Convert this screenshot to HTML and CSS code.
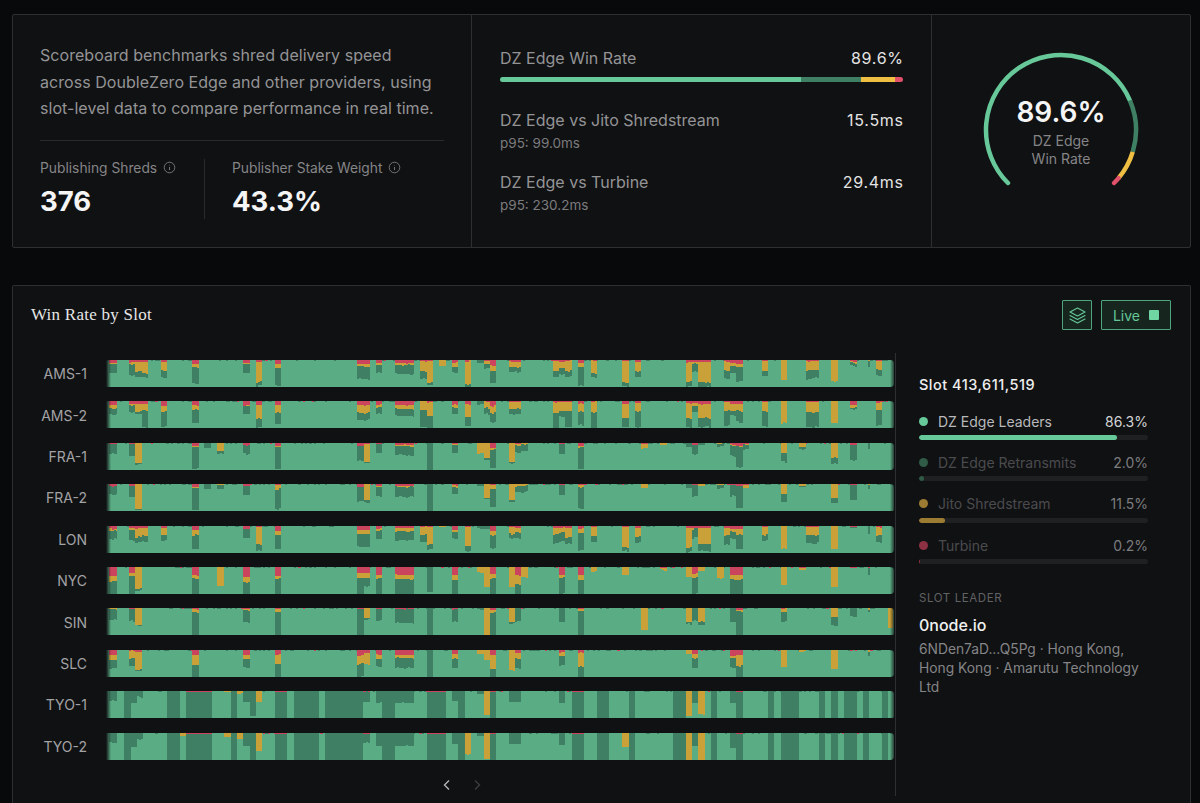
FILE: index.html
```html
<!DOCTYPE html>
<html lang="en">
<head>
<meta charset="utf-8">
<title>Scoreboard</title>
<link rel="stylesheet" href="styles.css">
</head>
<body>
<main class="page">
  <section class="summary">
    <div class="intro">
      <p class="intro-text">Scoreboard benchmarks shred delivery speed across DoubleZero Edge and other providers, using slot-level data to compare performance in real time.</p>
      <div class="stats">
        <div class="stat stat-first">
          <div class="stat-label">Publishing Shreds
            <svg class="info" viewBox="0 0 14 14"><circle cx="7" cy="7" r="5.7"/><path d="M7 6.4v3.4M7 4.2v.5"/></svg>
          </div>
          <div class="stat-value">376</div>
        </div>
        <div class="stat stat-second">
          <div class="stat-label">Publisher Stake Weight
            <svg class="info" viewBox="0 0 14 14"><circle cx="7" cy="7" r="5.7"/><path d="M7 6.4v3.4M7 4.2v.5"/></svg>
          </div>
          <div class="stat-value">43.3%</div>
        </div>
      </div>
    </div>
    <div class="metrics">
      <div class="metric-top">
        <div class="metric-line"><span>DZ Edge Win Rate</span><span class="metric-num">89.6%</span></div>
        <div class="share-bar">
          <span class="seg seg-leader"></span><span class="seg seg-retrans"></span><span class="seg seg-jito"></span><span class="seg seg-turbine"></span>
        </div>
      </div>
      <div class="metric">
        <div class="metric-line"><span>DZ Edge vs Jito Shredstream</span><span class="metric-num">15.5ms</span></div>
        <div class="metric-sub">p95: 99.0ms</div>
      </div>
      <div class="metric">
        <div class="metric-line"><span>DZ Edge vs Turbine</span><span class="metric-num">29.4ms</span></div>
        <div class="metric-sub">p95: 230.2ms</div>
      </div>
    </div>
    <div class="gauge-cell">
      <div class="gauge">
        <svg class="gauge-svg" viewBox="0 0 160 160" id="gauge"></svg>
        <div class="gauge-text">
          <div class="gauge-value">89.6%</div>
          <div class="gauge-label">DZ Edge<br>Win Rate</div>
        </div>
      </div>
    </div>
  </section>

  <section class="chart-card">
    <header class="chart-head">
      <h2 class="chart-title">Win Rate by Slot</h2>
      <div class="chart-actions">
        <button class="tool-btn" type="button" aria-label="Layers">
          <svg viewBox="0 0 24 24" class="layers"><path d="M12 2.500 2.500 7.500 12 12.500l9.500-5z"/><path d="M2.500 12 12 17l9.500-5"/><path d="M2.500 16.500 12 21.500l9.500-5"/></svg>
        </button>
        <button class="live-btn" type="button">Live <span class="live-square"></span></button>
      </div>
    </header>
    <div class="chart-body">
      <div class="plot">
        <div class="rows">
          <div class="row"><span class="row-label">AMS-1</span><svg class="strip" data-row="0"></svg></div>
          <div class="row"><span class="row-label">AMS-2</span><svg class="strip" data-row="1"></svg></div>
          <div class="row"><span class="row-label">FRA-1</span><svg class="strip" data-row="2"></svg></div>
          <div class="row"><span class="row-label">FRA-2</span><svg class="strip" data-row="3"></svg></div>
          <div class="row"><span class="row-label">LON</span><svg class="strip" data-row="4"></svg></div>
          <div class="row"><span class="row-label">NYC</span><svg class="strip" data-row="5"></svg></div>
          <div class="row"><span class="row-label">SIN</span><svg class="strip" data-row="6"></svg></div>
          <div class="row"><span class="row-label">SLC</span><svg class="strip" data-row="7"></svg></div>
          <div class="row"><span class="row-label">TYO-1</span><svg class="strip" data-row="8"></svg></div>
          <div class="row"><span class="row-label">TYO-2</span><svg class="strip" data-row="9"></svg></div>
        </div>
        <div class="pager">
          <svg class="chev" viewBox="0 0 12 12"><path d="M8 1.500 3.500 6 8 10.500"/></svg>
          <svg class="chev chev-off" viewBox="0 0 12 12"><path d="M4 1.500 8.500 6 4 10.500"/></svg>
        </div>
      </div>
      <aside class="side">
        <div class="slot-id">Slot 413,611,519</div>
        <ul class="legend">
          <li class="legend-item">
            <div class="legend-line"><span class="dot dot-leader"></span><span class="legend-name name-on">DZ Edge Leaders</span><span class="legend-val val-on">86.3%</span></div>
            <div class="track"><span class="fill fill-leader"></span></div>
          </li>
          <li class="legend-item">
            <div class="legend-line"><span class="dot dot-retrans"></span><span class="legend-name">DZ Edge Retransmits</span><span class="legend-val">2.0%</span></div>
            <div class="track"><span class="fill fill-retrans"></span></div>
          </li>
          <li class="legend-item">
            <div class="legend-line"><span class="dot dot-jito"></span><span class="legend-name">Jito Shredstream</span><span class="legend-val">11.5%</span></div>
            <div class="track"><span class="fill fill-jito"></span></div>
          </li>
          <li class="legend-item">
            <div class="legend-line"><span class="dot dot-turbine"></span><span class="legend-name">Turbine</span><span class="legend-val">0.2%</span></div>
            <div class="track"><span class="fill fill-turbine"></span></div>
          </li>
        </ul>
        <div class="leader-cap">SLOT LEADER</div>
        <div class="leader-name">0node.io</div>
        <p class="leader-desc">6NDen7aD...Q5Pg · Hong Kong, Hong Kong · Amarutu Technology Ltd</p>
      </aside>
    </div>
  </section>
</main>
<script src="chart.js"></script>
</body>
</html>
```

FILE: styles.css
```css
* { box-sizing: border-box; }
html, body { margin: 0; height: 803px; overflow: hidden; }
body {
  background: #08090b;
  color: #9a9a9c;
  font-family: Inter, "Liberation Sans", sans-serif;
}
.page { padding: 14px 9px 0 12px; }

.summary {
  display: grid;
  grid-template-columns: 458px 461px 1fr;
  height: 234px;
  background: #101113;
  border: 1px solid #2e2f32;
  border-radius: 2px;
}
.intro { padding: 27px 27px 0 27px; }
.intro-text {
  margin: 0;
  font-size: 16px;
  line-height: 26.5px;
  color: #949496;
  letter-spacing: 0.05px;
}
.stats {
  display: flex;
  margin-top: 18px;
  padding-top: 18px;
  border-top: 1px solid #2a2b2e;
}
.stat-first { width: 165px; height: 60px; border-right: 1px solid #2a2b2e; }
.stat-second { padding-left: 27px; }
.stat-label {
  display: flex;
  align-items: center;
  gap: 6px;
  font-size: 13.8px;
  line-height: 18px;
  color: #858587;
  white-space: nowrap;
}
.info { width: 13px; height: 13px; fill: none; stroke: #7a7a7c; stroke-width: 1; }
.stat-value {
  margin-top: 6px;
  font-size: 27.5px;
  line-height: 36px;
  font-weight: 650;
  color: #f5f5f5;
}

.metrics {
  padding: 31px 28px 0 28px;
  border-left: 1px solid #2e2f32;
  border-right: 1px solid #2e2f32;
}
.metric-line {
  display: flex;
  justify-content: space-between;
  font-size: 16px;
  line-height: 24px;
  color: #949496;
}
.metric-num { color: #e4e4e4; letter-spacing: 0.7px; margin-right: -0.7px; }
.share-bar {
  display: flex;
  height: 5px;
  margin-top: 7px;
  border-radius: 3px;
  overflow: hidden;
}
.seg { display: block; height: 100%; }
.seg-leader { width: 74.7%; background: #67c99a; }
.seg-retrans { width: 14.9%; background: #3f8065; }
.seg-jito { width: 8.5%; background: #efbf44; }
.seg-turbine { width: 1.9%; background: #e2516a; }
.metric-top { height: 62px; }
.metric { height: 62px; }
.metric-sub { margin-top: 1px; font-size: 13.5px; line-height: 20px; color: #7c7c7e; }

.gauge-cell { display: flex; justify-content: center; align-items: flex-start; padding-top: 35px; }
.gauge { position: relative; width: 160px; height: 160px; }
.gauge-svg { display: block; width: 160px; height: 160px; }
.gauge-text {
  position: absolute;
  left: 0;
  right: 0;
  top: 44px;
  text-align: center;
}
.gauge-value { font-size: 28px; line-height: 36px; font-weight: 600; color: #f5f5f5; }
.gauge-label { margin-top: 2px; font-size: 14px; line-height: 18px; color: #858587; }

.chart-card {
  height: 518px;
  margin-top: 37px;
  background: #101113;
  border: 1px solid #2e2f32;
  border-bottom: 0;
  border-radius: 2px 2px 0 0;
}
.chart-head {
  display: flex;
  justify-content: space-between;
  align-items: flex-start;
  height: 67px;
  padding: 14px 19px 0 18px;
}
.chart-title {
  margin: 0;
  padding-top: 5px;
  font-family: "Liberation Serif", serif;
  font-size: 17px;
  line-height: 20px;
  font-weight: 400;
  color: #e6e6e6;
  letter-spacing: 0.25px;
}
.chart-actions { display: flex; gap: 9px; }
.tool-btn, .live-btn {
  height: 30px;
  display: flex;
  align-items: center;
  justify-content: center;
  padding: 0;
  background: #16261f;
  border: 1px solid #4fa67e;
  border-radius: 1px;
  font-family: inherit;
}
.tool-btn { width: 30px; }
.layers { width: 19px; height: 19px; fill: none; stroke: #65c797; stroke-width: 1.4; stroke-linejoin: round; stroke-linecap: round; }
.live-btn { width: 70px; gap: 9px; font-size: 14px; color: #65c797; }
.live-square { width: 10px; height: 10px; background: #6fd5a3; border-radius: 1px; }

.chart-body { display: flex; height: 443px; }
.plot { width: 882px; padding-top: 7px; }
.rows { display: flex; flex-direction: column; gap: 14px; }
.row { display: flex; align-items: center; height: 27.4px; }
.row-label {
  width: 74px;
  text-align: right;
  font-size: 14px;
  color: #a3a3a5;
}
.strip {
  display: block;
  width: 788px;
  height: 27.4px;
  margin-left: 19px;
  border-radius: 0 3px 3px 0;
  shape-rendering: crispEdges;
  -webkit-mask-image: linear-gradient(to right, transparent, #000 5px, #000 calc(100% - 4px), rgba(0,0,0,.3));
  mask-image: linear-gradient(to right, transparent, #000 5px, #000 calc(100% - 4px), rgba(0,0,0,.3));
}
.pager { display: flex; justify-content: center; gap: 18px; margin-top: 19px; padding-left: 16px; }
.chev { width: 12px; height: 12px; fill: none; stroke: #b4b4b4; stroke-width: 1.4; }
.chev-off { stroke: #3c3c3f; }

.side {
  flex: 1;
  border-left: 1px solid #2e2f32;
  padding: 23px 42px 0 23px;
}
.slot-id { font-size: 14.5px; line-height: 18px; font-weight: 500; color: #eeeeee; letter-spacing: 0.5px; white-space: nowrap; }
.legend { list-style: none; margin: 18px 0 0; padding: 0; }
.legend-item { height: 41.4px; }
.legend-line { display: flex; align-items: center; height: 18px; font-size: 14px; color: #4b4b4e; }
.dot { width: 9px; height: 9px; border-radius: 50%; margin-right: 10px; }
.dot-leader { background: #67c99a; }
.dot-retrans { background: #2f5b47; }
.dot-jito { background: #9c7c32; }
.dot-turbine { background: #8c3144; }
.legend-name { flex: 1; }
.name-on { color: #b9b9bb; }
.legend-val { color: #7c7c7e; }
.val-on { color: #d4d4d6; }
.track { height: 5px; margin-top: 5px; background: #1f2022; border-radius: 3px; overflow: hidden; }
.fill { display: block; height: 100%; border-radius: 3px; }
.fill-leader { width: 86.3%; background: #67c99a; }
.fill-retrans { width: 2%; background: #2f5b47; }
.fill-jito { width: 11.5%; background: #9c7c32; }
.fill-turbine { width: 0.2%; background: #8c3144; }

.leader-cap { margin-top: 12px; font-size: 11.5px; line-height: 16px; letter-spacing: 0.6px; color: #626264; }
.leader-name { margin-top: 8px; font-size: 16px; line-height: 22px; font-weight: 500; color: #f2f2f2; }
.leader-desc { margin: 4px 0 0; font-size: 13.8px; line-height: 19.3px; color: #858587; }
```

FILE: chart.js
```js
// Slot blocks: x range along the strip, in pixels of its 786-wide viewBox.
var S = {
  a:[2.3,9.7], b1:[22,28.3], b2:[28.3,34.7], b3:[34.7,41.3], c:[53.7,60.3], d:[85.3,92],
  e:[136.3,142.7], f:[148.7,155.3], g:[167.7,174.3], h1:[250,256.5], h2:[256.5,263],
  i:[269,275.3], j:[288,307], k1:[313.3,319.7], k2:[319.7,326], l:[332.3,338.7], m:[345,351.3],
  n:[357.7,364], o1:[370.3,376.7], o2:[376.7,383], o3:[383,389.3],
  p1:[401.7,408], p2:[408,414.3], p3:[414.3,420.7],
  q1:[445.7,452], q2:[452,458.3], q3:[458.3,464.7], r:[471,477.3], s:[483.7,490],
  t:[515.3,521.7], u:[528,534.3], u2:[534,541], u3:[553,560],
  v1:[578.7,585], v2:[585,591.3], v3:[591.3,597.7], v4:[597.7,604], w0:[610.3,616.7],
  w1:[616.7,623], w2:[623,629.3], w3:[629.3,635.7], w4:[635.7,642],
  x:[654.7,661], y:[673.7,680], y2:[692.3,699], z1:[699,705.3], z2:[705.3,711.7],
  aa:[724.3,730.7], bb:[743.3,749.7], cc:[760.7,762.5], dd:[768.7,775], ee:[781,786],
  e1:[97,104], e2:[110.3,117]
};

// Row text: slot:red,yellow,dark (stack heights from the top of the strip).
var ROWS = [
 "a:3,1,9 b1:2,2,11 b2:2,9,6 b3:2,11,4 c:2,9,7 d:4,4,16 e:3,1,9 f:2,20,4 g:4,4,17 h1:4,3,12 h2:4,3,12 i:3,2,8 j:3,2,9 k1:1,10,8 k2:1,22,3 l:0,6,0 m:3,4,6 n:1,23,3 o1:0,0,3 o2:1,3,4 o3:6,5,12 p1:2,5,5 p2:2,5,5 q1:1,10,6 q2:2,6,6 q3:1,10,6 r:3,4,18 s:1,12,4 t:1,22,3 u:2,9,6 v1:2,20,4 v2:2,2,8 v3:2,20,5 v4:2,20,5 w1:2,9,8 w2:3,3,7 w3:4,3,14 x:1,10,5 y:0,20,0 z1:1,9,9 z2:1,9,8 aa:0,21,0 bb:2,1,3 cc:0,1,6 dd:1,9,6",
 "a:4,3,6 b1:3,1,7 b2:3,7,3 b3:3,6,17 c:5,6,15 d:4,5,13 e:4,1,8 f:4,14,9 g:4,8,11 h1:4,8,7 h2:4,8,7 i:4,3,6 j:4,4,7 k1:0,9,17 k2:1,14,12 m:4,3,6 n:3,13,9 o1:0,0,3 o2:1,6,6 o3:5,7,9 p1:1,7,5 p2:1,7,5 q1:1,10,16 q2:1,9,5 q3:1,9,16 r:3,8,13 s:1,10,16 t:3,14,9 u:2,8,16 v1:2,15,9 v2:2,3,6 v3:3,14,9 v4:3,14,9 w1:1,9,15 w2:3,7,4 w3:3,7,11 x:1,9,15 y:0,22,0 z1:1,10,15 z2:1,10,15 aa:0,22,0 bb:4,3,1 dd:2,7,15",
 "a:1,0,10 b1:1,0,12 b2:0,20,1 d:3,1,22 e1:0,0,5 e2:0,8,3 e:2,0,9 g:3,1,22 h1:3,0,15 h2:1,18,1 i:1,0,9 j:2,1,9 k2:0,0,27.4 m:1,1,8 o1:0,10,0 o2:0,15,2 o3:5,1,18 p1:0,19,1 p2:1,1,7 p3:0,1,7 q2:1,0,10 r:3,1,22 u2:1,4,0 u3:0,2,0 v1:0,0,4 v2:2,0,9 v3:0,0,2 w0:0,1,3 w2:2,1,10 w3:3,1,20 w4:1,1,5 y:0,10,9 y2:0,4,3 aa:0,15,6 bb:2,0,15 cc:0,0,6",
 "a:2,0,8 b1:2,0,11 b2:0,25,1 d:3,1,22 e1:0,0,5 e2:0,1,4 e:2,0,9 g:1,4,20 h1:3,0,14 h2:0,16,3 i:2,1,9 j:2,1,10 k2:0,0,27.4 m:1,2,7 o1:0,0,2 o2:0,14,1 o3:1,4,18 p1:0,16,2 p2:0,2,6 p3:0,2,6 q2:1,0,10 r:1,3,21 u2:0,4,0 v1:0,0,4 v2:1,0,11 v3:0,2,0 w0:0,1,3 w2:1,0,11 w3:2,0,22 w4:1,3,0 y:0,10,8 y2:0,2,1 aa:0,14,5 bb:1,0,15 cc:0,1,5",
 "a:3,2,8 b1:2,2,10 b2:2,9,5 b3:2,8,6 c:2,7,6 d:4,5,14 e:3,0,9 f:1,17,6 g:5,4,14 h1:4,4,13 h2:4,4,13 i:3,1,9 j:2,3,9 k1:1,8,7 k2:1,17,5 l:0,1,0 m:4,2,7 n:1,19,5 o1:0,0,3 o2:0,0,3 o3:5,4,13 p1:1,7,4 p2:2,4,6 q1:2,6,9 q2:1,5,9 q3:2,9,6 r:3,4,17 s:1,9,6 t:1,20,4 u:2,8,6 v1:2,20,4 v2:2,1,9 v3:2,16,7 v4:2,16,7 w1:2,7,9 w2:3,3,7 w3:3,6,14 x:1,8,6 y:0,23,0 z1:1,8,8 z2:1,8,8 aa:0,23,0 bb:1,0,1 cc:0,0,8 dd:1,8,7",
 "a:9,5,13 b1:6,3,18.4 b2:0,22,2 e2:0,19,0 d:8,4,15.4 e:10,5,12.4 g:9,3,15.4 h1:6,5,16 h2:6,5,8 i:8,3,16.4 j:8,4,15.4 k2:0,0,25 m:8,5,14.4 o1:0,6,0 o2:0,20,0 o3:7,4,16.4 p1:0,20,0 p2:8,9,10.4 p3:0,10,0 q2:8,3,16.4 r:8,4,15.4 s:0,5,0 t:0,8,0 u3:1,2,0 v1:0,10,0 v2:7,4,16.4 v3:0,4,0 w0:0,11,0 w2:8,5,14.4 w3:8,5,14.4 y:0,18,0 y2:1,2,0 aa:0,20,0 bb:1,0,0 cc:1,1,7",
 "a:0,1,11 b1:1,0,12 b2:0,17,1 d:1,3,23.4 e:1,1,12 g:1,3,23.4 h1:1,0,26.4 h2:0,10,2 i:1,0,12 j:1,0,14 k2:0,0,27.4 m:1,0,12 o1:0,0,2 o2:0,27.4,0 o3:2,2,23.4 p1:0,14,2 p2:0,0,13 q2:0,0,14 r:1,2,24.4 u2:0,22,0 v1:0,14,2 v2:0,0,13 v3:0,14,3 w2:0,0,14 w3:2,1,24.4 y:1,3,10 aa:0,9,9 bb:0,0,9 cc:0,2,2 ee:0,20,0",
 "a:5,5,8 b1:1,7,8 b2:2,18,1 d:5,10,12.4 e:5,4,8 g:5,9,13.4 h1:6,8,13.4 h2:3,12,0 i:5,4,8 j:5,3,10 k2:0,0,27.4 m:4,5,9 o1:0,4,0 o2:0,10,0 o3:5,14,8.4 p1:0,20,0 p2:3,6,9 q2:3,3,9 r:3,14,10.4 v1:0,4,0 v2:4,4,10 w2:6,2,10 w3:5,11,11.4 y:0,17,0 y2:0,2,0 aa:0,19,0 bb:1,0,0 cc:0,2,4",
 "a:0,0,10 60.3-73:0,0,27.4 79.3-104.7:0.6,0,26.8 17.3-23.6:0,0,27.4 23.6-30:0,0,12 30-36:0,0,6 117.3-123.7:0,1,0 123.7-130:0,0,27.4 130-136.3:0,3,0 136.3-142.7:0,0,11 142.7-149:0,0,25 149-155.3:0,11,0 167.7-180.3:0.6,0,26.8 186.7-212:0,0,27.4 218.3-256.3:0,0,27.4 256.3-263:0.6,0,10 269-275.3:0,0,12 275.3-288:0,0,27.4 288-307:0,0,12 319.7-338.7:0.6,0,26.8 345-351.3:0,0,10 351.3-357.7:0,0,27.4 370.3-376.7:0,0,3 376.7-383:0,24,0 383-389.3:0.8,0,26.6 401.7-414.3:0,0,11 452-458.3:0,0,12 464.7-477.3:0.8,0,26.6 490-502.3:0,0,27.4 521.7-528:0,0,27.4 566-578.7:0,0,27.4 578.7-585:0,25,0 585-591.3:0,0,12 591.3-597.7:0,23,0 604-610.3:0,0,27.4 623-629.3:0,0,12 629.3-635.7:0.8,0,26.6 661-667.3:0,0,27.4 673.7-692.3:0,0,27.4 692.3-699:0,0,1 711.7-718:0,0,27.4 724.3-730.7:0,0,27.4 737-749.7:0,0,27.4 756-762.3:0,0,27.4 775-781.3:0,0,27.4",
 "a:0,0,10 60.3-73:0,0,27.4 73-79.3:0,3,0 79.3-104.7:0.6,0,26.8 17.3-23.6:0,0,27.4 23.6-30:0,0,14 30-36:0,0,6 117.3-123.7:0,4,0 123.7-130:0,0,27.4 130-136.3:0,6,0 136.3-142.7:0,0,13 142.7-149:0,0,27.4 149-155.3:0,18,0 167.7-180.3:0.6,0,26.8 186.7-212:0,0,27.4 218.3-256.3:0,0,27.4 256.3-263:0.6,0,9 269-275.3:0,0,13 275.3-288:0,0,27.4 288-307:0,0,13 319.7-338.7:0.6,0,26.8 345-351.3:0,0,11 351.3-357.7:0,0,27.4 357.7-364:0,21,0 370.3-376.7:0,0,3 376.7-383:0,26,0 383-389.3:0.8,0,26.6 401.7-414.3:0,0,11 452-458.3:0,0,12 464.7-477.3:0.8,0,26.6 490-502.3:0,0,27.4 515.3-521.7:0,14,0 521.7-528:0,0,27.4 566-578.7:0,0,27.4 578.7-585:0,27.4,0 585-591.3:0,0,13 591.3-597.7:0,27.4,0 604-610.3:0,0,27.4 623-629.3:0,0,15 629.3-635.7:0.8,0.6,26 661-667.3:0,0,27.4 673.7-692.3:0,0,27.4 711.7-718:0,0,27.4 724.3-730.7:0,0,27.4 737-749.7:0,0,27.4 756-762.3:0,0,27.4 775-781.3:0,0,27.4"
];

var COLORS = { base: "#5aac85", dark: "#3f8065", jito: "#c9a138", turbine: "#c9445c", edge: "#3c9a6e" };
var H = 27.4, W = 786, STEP = 2.2, NS = "http://www.w3.org/2000/svg";

function rng(seed) {
  var s = seed;
  return function () {
    s = (s * 16807) % 2147483647;
    return (s - 1) / 2147483646;
  };
}

function addRect(svg, x, y, w, h, fill) {
  if (h <= 0) return;
  var r = document.createElementNS(NS, "rect");
  r.setAttribute("x", x.toFixed(2));
  r.setAttribute("y", y.toFixed(2));
  r.setAttribute("width", w.toFixed(2));
  r.setAttribute("height", h.toFixed(2));
  r.setAttribute("fill", fill);
  svg.appendChild(r);
}

function drawStack(svg, x, w, r, y, d, rand) {
  var top = 0;
  var j = function (v) { return v > 0 && v < 27 ? Math.max(0.5, v + (rand() - 0.5) * 1.1) : v; };
  var rr = j(r), yy = j(y), dd = j(d);
  if (d >= 26) rr = r;
  addRect(svg, x, top, w, Math.min(rr, H - top), COLORS.turbine); top += rr;
  addRect(svg, x, top, w, Math.min(yy, H - top), COLORS.jito); top += yy;
  addRect(svg, x, top, w, Math.min(dd, H - top), COLORS.dark);
}

document.querySelectorAll(".strip").forEach(function (svg) {
  var idx = +svg.getAttribute("data-row");
  var rand = rng(7919 * (idx + 1));
  svg.setAttribute("viewBox", "-1 0 788 " + H);
  svg.setAttribute("preserveAspectRatio", "none");
  addRect(svg, -1, 0, W + 2, H, COLORS.base);

  // Thin noise along the top edge of every strip.
  for (var n = 0; n < W; n += 2.2) {
    var p = rand();
    if (p < 0.2) addRect(svg, n, 0, 2.2, 1, COLORS.dark);
    else if (p < 0.23) addRect(svg, n, 0, 2.2, 1, COLORS.turbine);
  }

  ROWS[idx].split(" ").forEach(function (item) {
    var parts = item.split(":");
    var range = S[parts[0]] || parts[0].split("-").map(Number);
    var v = parts[1].split(",").map(Number);
    var span = range[1] - range[0];
    var flat = v[2] >= 26 || v[1] >= 27;
    for (var x = range[0]; x < range[1] - 0.01; x += flat ? span : STEP) {
      var w = flat ? span : Math.min(STEP, range[1] - x);
      drawStack(svg, x, w, v[0], v[1], v[2], rand);
    }
  });
  addRect(svg, -1, H - 0.7, W + 2, 0.7, COLORS.edge);
});

// Gauge: 270 degree arc split into the four shares.
(function () {
  var svg = document.getElementById("gauge");
  var cx = 80, cy = 80, rad = 75;
  var parts = [[0, 0.747, "#67c99a"], [0.747, 0.896, "#3f8065"], [0.896, 0.981, "#efbf44"], [0.981, 1, "#e2516a"]];
  function pt(f) {
    var a = (-135 + f * 270) * Math.PI / 180;
    return (cx + rad * Math.sin(a)).toFixed(2) + " " + (cy - rad * Math.cos(a)).toFixed(2);
  }
  parts.forEach(function (p, i) {
    var path = document.createElementNS(NS, "path");
    var large = (p[1] - p[0]) * 270 > 180 ? 1 : 0;
    path.setAttribute("d", "M" + pt(p[0]) + " A" + rad + " " + rad + " 0 " + large + " 1 " + pt(p[1]));
    path.setAttribute("fill", "none");
    path.setAttribute("stroke", p[2]);
    path.setAttribute("stroke-width", "4.5");
    if (i === 0 || i === 3) path.setAttribute("stroke-linecap", "round");
    svg.appendChild(path);
  });
})();
```
